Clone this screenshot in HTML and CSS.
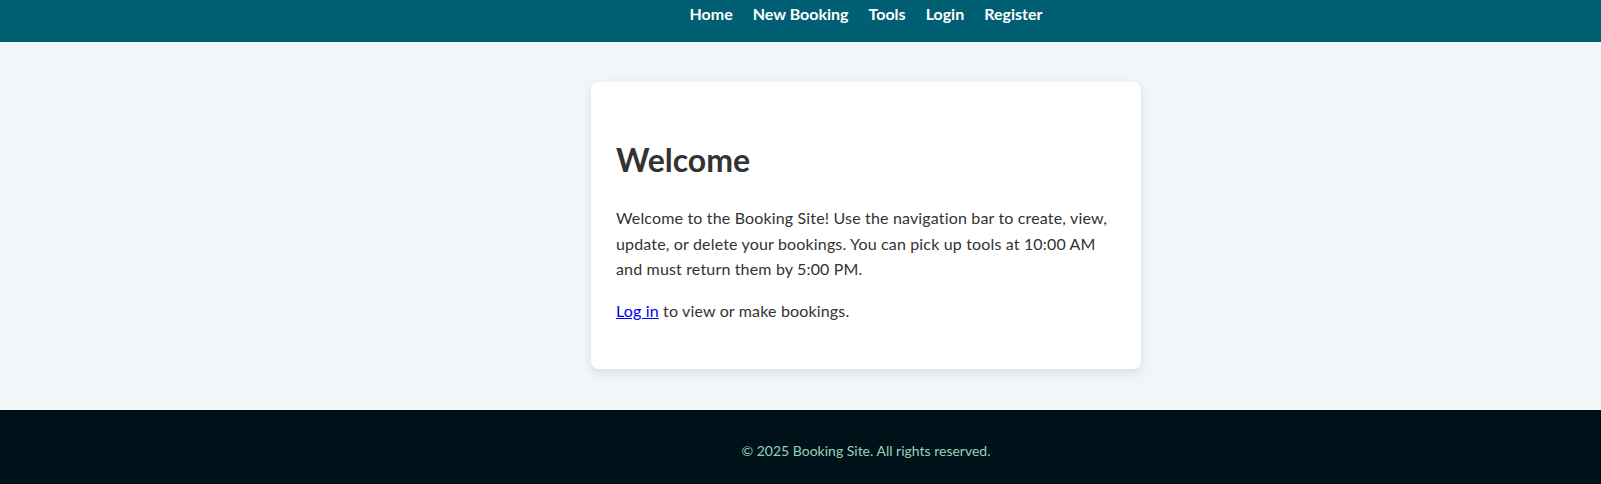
FILE: index.html
```html
<!DOCTYPE html>
<html lang="en">
<head>
<meta charset="utf-8">
<title>Booking Site</title>
<link rel="stylesheet" href="styles.css">
</head>
<body>
<header class="site-header">
  <nav class="nav shift">
    <a href="#">Home</a>
    <a href="#">New Booking</a>
    <a href="#">Tools</a>
    <a href="#">Login</a>
    <a href="#">Register</a>
  </nav>
</header>
<main class="main shift">
  <section class="card">
    <h1>Welcome</h1>
    <p>Welcome to the Booking Site! Use the navigation bar to create, view, update, or delete your bookings. You can pick up tools at 10:00 AM and must return them by 5:00 PM.</p>
    <p><a href="#" class="link">Log in</a> to view or make bookings.</p>
  </section>
</main>
<footer class="site-footer">
  <p class="shift">© 2025 Booking Site. All rights reserved.</p>
</footer>
</body>
</html>
```

FILE: styles.css
```css
* { box-sizing: border-box; }
html, body { margin: 0; padding: 0; }
body {
  font-family: "Lato", "Noto Sans", sans-serif;
  font-size: 16px;
  line-height: 1.6;
  color: #333;
  background: #f2f6f9;
}
.shift { padding-left: 131px; }
.site-header {
  background: #005f73;
  height: 42px;
  padding-top: 2px;
}
.nav {
  display: flex;
  justify-content: center;
  gap: 20px;
  line-height: 24px;
}
.nav a {
  color: #fff;
  font-weight: 700;
  text-decoration: none;
}
.main {
  display: flex;
  justify-content: center;
  padding-top: 40px;
  padding-bottom: 41px;
}
.card {
  width: 550px;
  background: #fff;
  border-radius: 8px;
  box-shadow: 0 4px 12px rgba(0, 0, 0, 0.1);
  padding: 32px 25px 29px;
}
.card h1 {
  font-size: 32px;
  line-height: 1.6;
  margin: 20px 0 20px;
  color: #333;
}
.card p {
  margin: 0 0 16px;
  letter-spacing: 0.16px;
}
.link { color: #0000ee; }
.site-footer {
  background: #001219;
  padding: 16px 0;
  text-align: center;
  color: #94d2bd;
  font-size: 14px;
}
.site-footer p { margin: 14px 0; }
```
